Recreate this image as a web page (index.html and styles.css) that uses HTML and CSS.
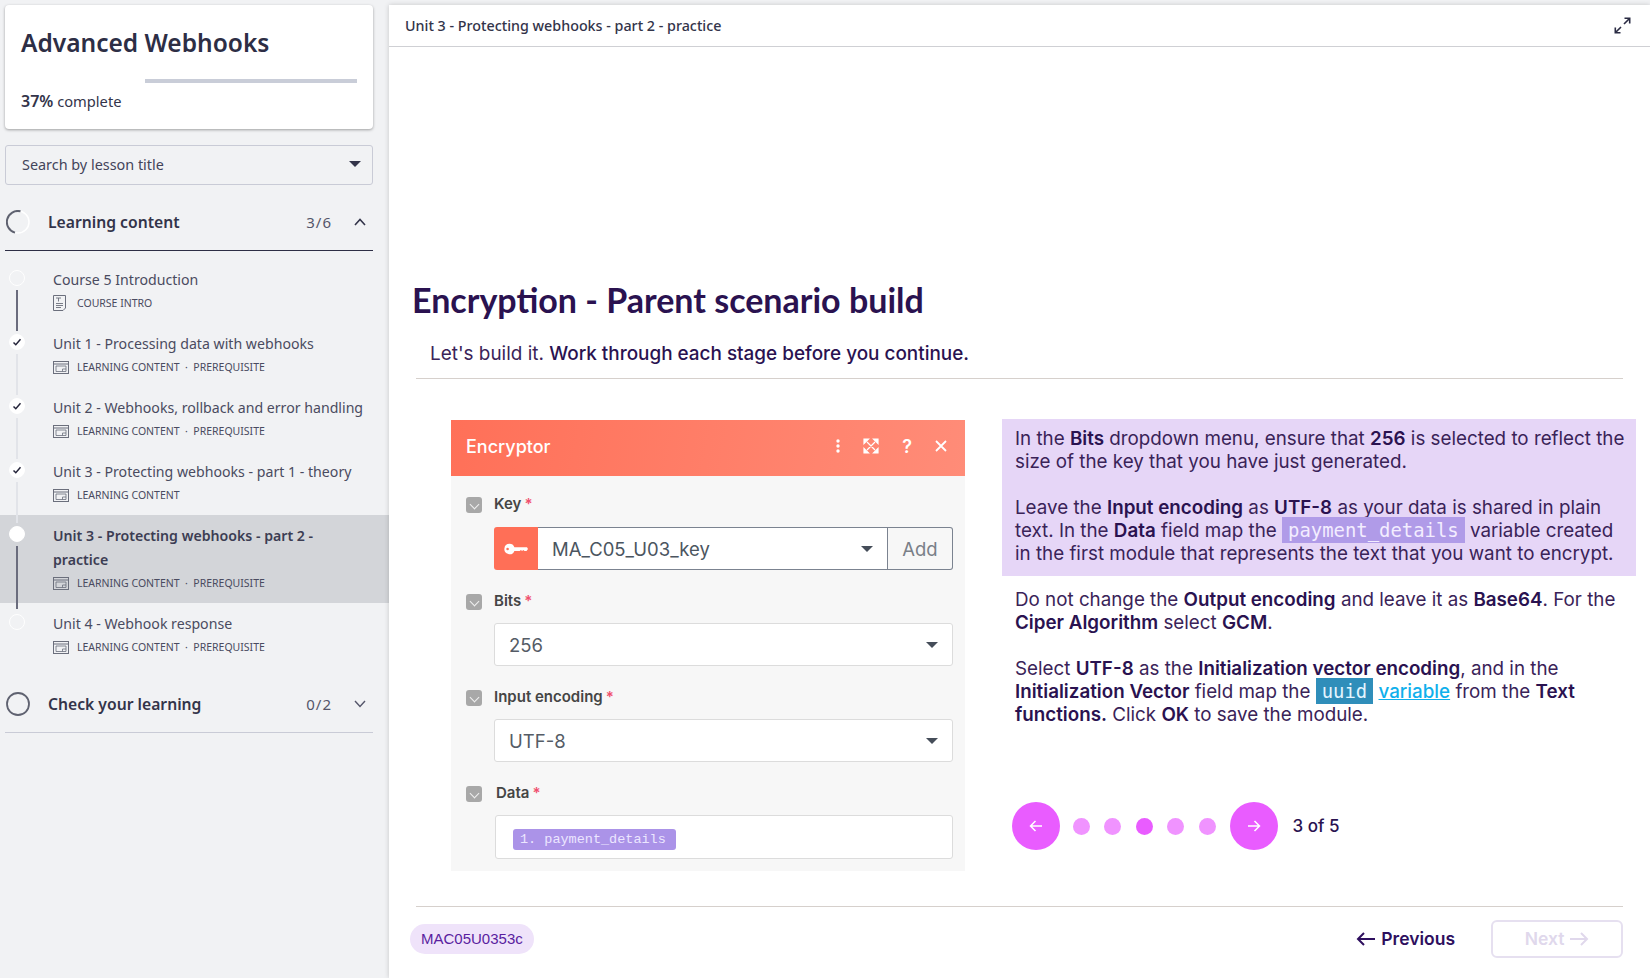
FILE: index.html
```html
<!DOCTYPE html>
<html lang="en">
<head>
<meta charset="UTF-8">
<meta name="viewport" content="width=device-width, initial-scale=1.0">
<title>Advanced Webhooks</title>
<link rel="stylesheet" href="styles.css">
</head>

<body>
  <svg class="defs" width="0" height="0">
    <symbol id="slide-icon" viewBox="0 0 16 13">
      <rect x="0.5" y="0.5" width="15" height="12" fill="none" stroke="#6b6f7c"/>
      <path d="M0.5 3h15" stroke="#6b6f7c" fill="none"/>
      <path d="M3 5h10v5.500h-10zM9.500 10.500v-2.500h3.500" stroke="#6b6f7c" fill="none" stroke-width="0.8"/>
    </symbol>
    <symbol id="tick" viewBox="0 0 10 10">
      <path d="M1.500 5.500l2.300 2.200 4.700-5.400" fill="none" stroke="#24243a" stroke-width="1.500"/>
    </symbol>
  </svg>

  <aside class="sidebar">
    <div class="course-card">
      <h1>Advanced Webhooks</h1>
      <div class="progress"><div class="progress-fill"></div></div>
      <p class="progress-text"><b>37%</b> complete</p>
    </div>

    <div class="lesson-search">
      <span>Search by lesson title</span>
      <span class="caret"></span>
    </div>

    <div class="section-head section-open">
      <svg class="ring" width="24" height="24" viewBox="0 0 24 24">
        <circle cx="12" cy="12" r="11" fill="none" stroke="#ffffff" stroke-width="1.500"/>
        <path d="M14.500 1.300A11 11 0 0 0 9 22.600" fill="none" stroke="#5f6270" stroke-width="2"/>
      </svg>
      <span class="section-title">Learning content</span>
      <span class="section-count">3/6</span>
      <svg class="chevron" width="12" height="8" viewBox="0 0 12 8"><path d="M1 7l5-5.500 5 5.500" fill="none" stroke="#33344a" stroke-width="1.600"/></svg>
    </div>

    <ul class="lessons">
      <li class="lesson">
        <div class="rail"><span class="dot"></span><span class="line line-dark"></span></div>
        <div class="lesson-body">
          <div class="lesson-name">Course 5 Introduction</div>
          <div class="lesson-meta"><svg class="doc-icon" width="13" height="16" viewBox="0 0 13 16"><path d="M0.500 0.500h12v12.500l-2.500 2.500h-9.500z" fill="none" stroke="#6b6f7c"/><path d="M3 3h5M5.500 3v3.500M3 8.500h7M3 10.500h7M3 12.500h5" fill="none" stroke="#6b6f7c" stroke-width="0.900"/></svg>COURSE INTRO</div>
        </div>
      </li>
      <li class="lesson">
        <div class="rail"><span class="dot dot-done"><svg width="10" height="10"><use href="#tick"/></svg></span><span class="line"></span></div>
        <div class="lesson-body">
          <div class="lesson-name">Unit 1 - Processing data with webhooks</div>
          <div class="lesson-meta"><svg class="slide-icon" width="16" height="13"><use href="#slide-icon"/></svg>LEARNING CONTENT &nbsp;·&nbsp; PREREQUISITE</div>
        </div>
      </li>
      <li class="lesson">
        <div class="rail"><span class="dot dot-done"><svg width="10" height="10"><use href="#tick"/></svg></span><span class="line"></span></div>
        <div class="lesson-body">
          <div class="lesson-name">Unit 2 - Webhooks, rollback and error handling</div>
          <div class="lesson-meta"><svg class="slide-icon" width="16" height="13"><use href="#slide-icon"/></svg>LEARNING CONTENT &nbsp;·&nbsp; PREREQUISITE</div>
        </div>
      </li>
      <li class="lesson">
        <div class="rail"><span class="dot dot-done"><svg width="10" height="10"><use href="#tick"/></svg></span><span class="line"></span></div>
        <div class="lesson-body">
          <div class="lesson-name">Unit 3 - Protecting webhooks - part 1 - theory</div>
          <div class="lesson-meta"><svg class="slide-icon" width="16" height="13"><use href="#slide-icon"/></svg>LEARNING CONTENT</div>
        </div>
      </li>
      <li class="lesson lesson-active">
        <div class="rail"><span class="dot dot-current"></span><span class="line line-dark line-long"></span></div>
        <div class="lesson-body">
          <div class="lesson-name">Unit 3 - Protecting webhooks - part 2 - practice</div>
          <div class="lesson-meta"><svg class="slide-icon" width="16" height="13"><use href="#slide-icon"/></svg>LEARNING CONTENT &nbsp;·&nbsp; PREREQUISITE</div>
        </div>
      </li>
      <li class="lesson">
        <div class="rail"><span class="dot"></span></div>
        <div class="lesson-body">
          <div class="lesson-name">Unit 4 - Webhook response</div>
          <div class="lesson-meta"><svg class="slide-icon" width="16" height="13"><use href="#slide-icon"/></svg>LEARNING CONTENT &nbsp;·&nbsp; PREREQUISITE</div>
        </div>
      </li>
    </ul>

    <div class="section-head section-closed">
      <svg class="ring" width="24" height="24" viewBox="0 0 24 24"><circle cx="12" cy="12" r="11" fill="none" stroke="#5f6270" stroke-width="1.800"/></svg>
      <span class="section-title">Check your learning</span>
      <span class="section-count">0/2</span>
      <svg class="chevron" width="12" height="8" viewBox="0 0 12 8"><path d="M1 1l5 5.500 5-5.500" fill="none" stroke="#55566a" stroke-width="1.400"/></svg>
    </div>
  </aside>

  <main class="main">
    <div class="topbar">
      <span>Unit 3 - Protecting webhooks - part 2 - practice</span>
      <svg width="17" height="17" viewBox="0 0 17 17"><path d="M10 7l5.500-5.500M10.500 1.300h5.200v5.200M7 10l-5.500 5.500M6.500 15.700h-5.200v-5.200" fill="none" stroke="#2b2c44" stroke-width="1.600"/></svg>
    </div>

    <div class="lesson-page">
      <h2 class="lesson-title">Encryption - Parent scenario build</h2>
      <p class="lead">Let's build it. <strong>Work through each stage before you continue.</strong></p>

      <div class="columns">
        <!-- module settings panel -->
        <div class="panel">
          <div class="panel-head">
            <span>Encryptor</span>
            <div class="panel-tools">
              <svg width="4" height="14" viewBox="0 0 4 14"><circle cx="2" cy="2" r="1.700"/><circle cx="2" cy="7" r="1.700"/><circle cx="2" cy="12" r="1.700"/></svg>
              <svg width="16" height="16" viewBox="0 0 16 16"><path d="M1 1h4.500L1 5.500zM15 1v4.500L10.500 1zM1 15v-4.500L5.500 15zM15 15h-4.500L15 10.500zM4 4l8 8M12 4l-8 8" stroke="#fff" stroke-width="1.200"/></svg>
              <span class="tool-q">?</span>
              <svg width="12" height="12" viewBox="0 0 12 12"><path d="M1 1l10 10M11 1L1 11" fill="none" stroke="#fff" stroke-width="1.800"/></svg>
            </div>
          </div>
          <div class="panel-body">
            <div class="field-label"><span class="toggle"></span>Key<i>*</i></div>
            <div class="key-row">
              <span class="key-icon">
                <svg width="24" height="12" viewBox="0 0 24 12"><path d="M5.500 0.800a5.200 5.200 0 0 1 4.900 3.400H23l1 1.800-1.500 1.900h-2l-1.200-1-1.200 1-1.200-1-1.200 1h-5.300a5.200 5.200 0 1 1-4.900-7.100zM3.600 4.700a1.300 1.300 0 1 0 0 2.600 1.300 1.300 0 0 0 0-2.600z" fill="#fff" fill-rule="evenodd"/></svg>
              </span>
              <span class="key-value">MA_C05_U03_key<span class="caret caret-dark"></span></span>
              <span class="key-add">Add</span>
            </div>
            <div class="field-label"><span class="toggle"></span>Bits<i>*</i></div>
            <div class="select-box">256<span class="caret caret-dark"></span></div>
            <div class="field-label"><span class="toggle"></span>Input encoding<i>*</i></div>
            <div class="select-box">UTF-8<span class="caret caret-dark"></span></div>
            <div class="field-label"><span class="toggle toggle-data"></span>Data<i>*</i></div>
            <div class="data-box"><span class="data-pill">1. payment_details</span></div>
          </div>
        </div>

        <div class="steps">
          <div class="step-current">
            In the <b>Bits</b> dropdown menu, ensure that <b>256</b> is selected to reflect the size of the key that you have just generated.<br><br>
            Leave the <b>Input encoding</b> as <b>UTF-8</b> as your data is shared in plain text. In the <b>Data</b> field map the <code class="var-purple">payment_details</code> variable created in the first module that represents the text that you want to encrypt.
          </div>
          <div class="step-text">
            Do not change the <b>Output encoding</b> and leave it as <b>Base64</b>. For the <b>Ciper Algorithm</b> select <b>GCM</b>.<br><br>
            Select <b>UTF-8</b> as the <b>Initialization vector encoding</b>, and in the <b>Initialization Vector</b> field map the <code class="var-blue">uuid</code> <a href="#" class="var-link">variable</a> from the <b>Text functions.</b> Click <b>OK</b> to save the module.
          </div>
          <div class="carousel">
            <button class="round-btn"><svg width="14" height="12" viewBox="0 0 14 12"><path d="M13 6H2M6.500 1L1.500 6l5 5" fill="none" stroke="#fff" stroke-width="1.500"/></svg></button>
            <span class="pip"></span>
            <span class="pip"></span>
            <span class="pip pip-on"></span>
            <span class="pip"></span>
            <span class="pip"></span>
            <button class="round-btn"><svg width="14" height="12" viewBox="0 0 14 12"><path d="M1 6h11M7.500 1l5 5-5 5" fill="none" stroke="#fff" stroke-width="1.500"/></svg></button>
            <span class="page-count">3 of 5</span>
          </div>
        </div>
      </div>

      <div class="lesson-foot">
        <span class="code-chip">MAC05U0353c</span>
        <div class="pager">
          <a href="#" class="pager-prev"><svg width="20" height="14" viewBox="0 0 20 14"><path d="M19 7H2M8 1L2 7l6 6" fill="none" stroke="#2e0f5e" stroke-width="2"/></svg>Previous</a>
          <a href="#" class="pager-next">Next<svg width="20" height="14" viewBox="0 0 20 14"><path d="M1 7h17M12 1l6 6-6 6" fill="none" stroke="#e0d8ec" stroke-width="2"/></svg></a>
        </div>
      </div>
    </div>
  </main>
</body>
</html>
```

FILE: styles.css
```css
* {
  box-sizing: border-box;
}

body {
  margin: 0;
  height: 978px;
  overflow: hidden;
  display: flex;
  background-color: #f1f2f4;
  font-family: "Noto Sans", sans-serif;
  color: #33344a;
}

.defs {
  position: absolute;
}

/* sidebar */
.sidebar {
  width: 389px;
  flex-shrink: 0;
  padding: 5px 16px 0 5px;
}

.course-card {
  height: 124px;
  padding: 21px 16px 0 16px;
  background-color: #ffffff;
  border-radius: 4px;
  box-shadow: 0 1px 3px rgba(0, 0, 0, 0.35);
}

.course-card h1 {
  margin: 0;
  font-size: 24.5px;
  line-height: 34px;
  font-weight: 600;
  color: #2d2e45;
}

.progress {
  height: 4px;
  margin-top: 19px;
  background-color: #c9cdd8;
}

.progress-fill {
  width: 37%;
  height: 4px;
  background-color: #ffffff;
}

.progress-text {
  margin: 8px 0 0;
  font-size: 14.7px;
  line-height: 20px;
}

.progress-text b {
  font-weight: 600;
  font-size: 16px;
}

.lesson-search {
  height: 40px;
  margin-top: 16px;
  padding: 0 11px 2px 16px;
  display: flex;
  align-items: center;
  justify-content: space-between;
  border: 1px solid #c9cbd6;
  border-radius: 3px;
  font-size: 14.4px;
  color: #43445a;
}

.caret {
  width: 0;
  height: 0;
  border-left: 6px solid transparent;
  border-right: 6px solid transparent;
  border-top: 6px solid #33344a;
}

.section-head {
  height: 56px;
  display: flex;
  align-items: center;
  border-bottom: 1px solid #2d2e45;
}

.section-open {
  margin-top: 10px;
  padding-bottom: 2px;
}

.section-closed {
  height: 66px;
  padding-top: 9px;
  border-bottom-color: #c9cbd6;
}

.ring {
  margin-left: 1px;
  flex-shrink: 0;
}

.section-title {
  margin-left: 18px;
  flex: 1;
  font-size: 15.7px;
  font-weight: 600;
}

.section-count {
  font-size: 15px;
  letter-spacing: 1px;
  color: #55566a;
}

.chevron {
  margin: 0 7px 0 22px;
}

.lessons {
  list-style: none;
  margin: 0 -16px 0 -5px;
  padding: 8px 0 0;
}

.lesson {
  height: 64px;
  padding: 11px 0 0 9px;
  display: flex;
}

.lesson-active {
  height: 88px;
  background-color: #d3d5d9;
}

.rail {
  width: 16px;
  height: 16px;
  flex-shrink: 0;
  display: flex;
  flex-direction: column;
  align-items: center;
}

.dot {
  width: 16px;
  height: 16px;
  flex-shrink: 0;
  display: flex;
  align-items: center;
  justify-content: center;
  border: 1px solid #ffffff;
  border-radius: 50%;
}

.dot-done,
.dot-current {
  background-color: #ffffff;
}

.line {
  width: 2px;
  height: 41px;
  flex-shrink: 0;
  margin-top: 4px;
  background-color: #e2e4e9;
}

.line-dark {
  background-color: #6a6c7d;
}

.line-long {
  height: 63px;
}

.lesson-body {
  margin-left: 28px;
  margin-top: -2px;
}

.lesson-name {
  font-size: 14.15px;
  line-height: 24px;
  color: #4a4b60;
  max-width: 318px;
}

.lesson-active .lesson-name {
  font-weight: 600;
  color: #3c3d53;
}

.lesson-meta {
  display: flex;
  align-items: center;
  height: 22px;
  font-size: 10.5px;
  color: #4a4b60;
  white-space: pre;
}

.slide-icon {
  margin-right: 8px;
}

.doc-icon {
  margin-right: 11px;
}

/* main area */
.main {
  flex: 1;
  margin-top: 5px;
  background-color: #ffffff;
  box-shadow: 0 0 5px rgba(0, 0, 0, 0.18);
}

.topbar {
  height: 42px;
  padding: 0 19px 0 16px;
  display: flex;
  align-items: center;
  justify-content: space-between;
  border-bottom: 1px solid #cfd0d4;
  font-size: 14.3px;
  font-weight: 500;
  color: #33344a;
}

.lesson-page {
  padding: 0 27px 0 27px;
}

.lesson-title {
  margin: 233px 0 0 -4px;
  font-family: Lato, sans-serif;
  font-size: 34px;
  line-height: 40px;
  font-weight: 700;
  color: #2a1250;
}

.lead {
  margin: 22px 0 0;
  padding: 0 0 12px 14px;
  border-bottom: 1px solid #d6d0cc;
  font-family: Inter, sans-serif;
  font-size: 18.92px;
  line-height: 24px;
  color: #3a2358;
}

.lead strong {
  font-weight: 500;
  color: #2a1250;
}

.columns {
  height: 527px;
  display: flex;
  padding-top: 41px;
  margin-right: -14px;
}

.panel {
  width: 514px;
  height: 451px;
  margin-left: 35px;
  flex-shrink: 0;
  background-color: #f7f7f7;
  font-family: Inter, sans-serif;
}

.panel-head {
  height: 56px;
  padding: 0 18px 4px 15px;
  display: flex;
  align-items: center;
  justify-content: space-between;
  background: linear-gradient(100deg, #ff7058, #ff8c78);
  font-size: 18px;
  font-weight: 500;
  color: #ffffff;
}

.panel-tools {
  display: flex;
  align-items: center;
  gap: 23px;
  fill: #ffffff;
}

.tool-q {
  font-size: 18px;
  font-weight: 600;
}

.panel-body {
  padding: 15px 12px 0 15px;
}

.field-label {
  display: flex;
  align-items: center;
  height: 24px;
  font-size: 15px;
  font-weight: 600;
  color: #454545;
}

.field-label i {
  margin-left: 3px;
  font-style: normal;
  color: #f0506e;
}

.toggle {
  width: 16px;
  height: 16px;
  margin: 4px 12px 0 0;
  background-color: #a8a8a8;
  border-radius: 3px;
  position: relative;
}

.toggle-data {
  margin-right: 14px;
}

.toggle::after {
  content: "";
  position: absolute;
  left: 5px;
  top: 4px;
  width: 6px;
  height: 6px;
  border-right: 1.5px solid #f0f0f0;
  border-bottom: 1.5px solid #f0f0f0;
  transform: rotate(45deg);
}

.key-row {
  height: 43px;
  margin: 12px 0 18px 28px;
  display: flex;
  font-size: 18.5px;
  color: #4b5560;
}

.key-icon {
  width: 44px;
  display: flex;
  align-items: center;
  justify-content: center;
  background-color: #ff6f57;
  border-radius: 3px 0 0 3px;
}

.key-value {
  flex: 1;
  padding: 0 14px;
  display: flex;
  align-items: center;
  justify-content: space-between;
  background-color: #ffffff;
  border: 1px solid #7b8390;
  border-left: 0;
}

.key-add {
  width: 65px;
  display: flex;
  align-items: center;
  justify-content: center;
  border: 1px solid #7b8390;
  border-left: 0;
  border-radius: 0 3px 3px 0;
  color: #7a7f88;
}

.caret-dark {
  border-top-color: #454d59;
}

.select-box {
  height: 43px;
  margin: 11px 0 18px 28px;
  padding: 0 14px;
  display: flex;
  align-items: center;
  justify-content: space-between;
  background-color: #ffffff;
  border: 1px solid #dcdcdc;
  border-radius: 3px;
  font-size: 18.5px;
  color: #555c66;
}

.data-box {
  height: 44px;
  margin: 11px 0 0 29px;
  padding: 13px 0 0 17px;
  background-color: #ffffff;
  border: 1px solid #dcdcdc;
  border-radius: 3px;
}

.data-pill {
  display: block;
  width: 163px;
  height: 21px;
  padding-left: 7px;
  background-color: #ab93e8;
  border-radius: 3px;
  font-family: "Liberation Mono", monospace;
  font-size: 13.5px;
  line-height: 21px;
  color: #ece6ff;
}

/* text steps */
.steps {
  width: 634px;
  margin-left: 37px;
  margin-top: -1px;
  font-family: Inter, sans-serif;
  font-size: 18.8px;
  line-height: 23px;
  color: #3a2358;
}

.steps b {
  font-weight: 600;
  color: #2a1250;
}

.step-current {
  padding: 8px 10px 11px 13px;
  background-color: #e6d6f7;
}

.step-text {
  margin-top: 12px;
  padding: 0 10px 0 13px;
}

code {
  padding: 2px 6px;
  font-family: "DejaVu Sans Mono", monospace;
  font-size: 18.9px;
}

.var-purple {
  background-color: #b09be8;
  color: #f3edff;
}

.var-blue {
  background-color: #2f8eba;
  color: #e4f5ff;
}

.var-link {
  color: #0fb0ec;
  font-weight: 500;
  text-decoration: underline;
}

.carousel {
  height: 48px;
  margin: 76px 0 0 10px;
  display: flex;
  align-items: center;
  gap: 14.5px;
}

.round-btn {
  width: 48px;
  height: 48px;
  padding: 0;
  display: flex;
  align-items: center;
  justify-content: center;
  background-color: #e95cff;
  border: 0;
  border-radius: 50%;
}

.round-btn:first-child {
  margin-right: -2px;
}

.pip {
  width: 17px;
  height: 17px;
  border-radius: 50%;
  background-color: #f093ff;
}

.pip-on {
  background-color: #e95cff;
}

.page-count {
  font-size: 17px;
  font-weight: 500;
  color: #2a1250;
}

/* footer */
.lesson-foot {
  display: flex;
  align-items: center;
  justify-content: space-between;
  height: 72px;
  padding-bottom: 8px;
  border-top: 1px solid #d6d0cc;
}

.code-chip {
  margin-left: -6px;
  padding: 0 11px;
  height: 30px;
  display: flex;
  align-items: center;
  background-color: #efe3fa;
  border-radius: 15px;
  font-family: "Liberation Sans", sans-serif;
  font-size: 15px;
  color: #5a1ea0;
}

.pager {
  display: flex;
  align-items: center;
  gap: 36px;
  font-family: Inter, sans-serif;
  font-size: 17.5px;
  font-weight: 600;
}

.pager a {
  display: flex;
  align-items: center;
  gap: 5px;
  text-decoration: none;
}

.pager-prev {
  color: #2e0f5e;
}

.pager-next {
  width: 132px;
  height: 38px;
  justify-content: center;
  border: 2px solid #e6e0f0;
  border-radius: 6px;
  color: #e0d8ec;
}
```
